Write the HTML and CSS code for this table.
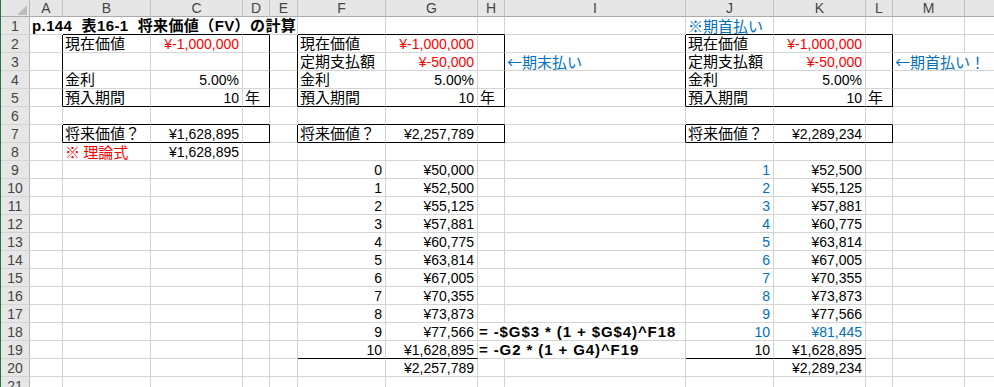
FILE: index.html
```html
<!DOCTYPE html>
<html lang="ja">
<head>
<meta charset="utf-8">
<title>将来価値(FV)の計算</title>
<link rel="stylesheet" href="styles.css">
</head>
<body>
<div class="sheet">
  <div class="corner"></div><div class="hd">A</div><div class="hd">B</div><div class="hd">C</div><div class="hd">D</div><div class="hd">E</div><div class="hd">F</div><div class="hd">G</div><div class="hd">H</div><div class="hd">I</div><div class="hd">J</div><div class="hd">K</div><div class="hd">L</div><div class="hd">M</div><div class="hd"></div>

  <div class="rh">1</div><div class="c nr title">p.144&nbsp;&nbsp;表16-1&nbsp;&nbsp;将来価値（FV）の計算</div><div class="c nr bb"></div><div class="c nr bb"></div><div class="c nr bb"></div><div class="c"></div><div class="c bb"></div><div class="c bb"></div><div class="c bb"></div><div class="c"></div><div class="c bb t blue cjk">※期首払い</div><div class="c bb"></div><div class="c bb"></div><div class="c"></div><div class="c"></div>

  <div class="rh">2</div><div class="c br"></div><div class="c t">現在価値</div><div class="c n red">¥-1,000,000</div><div class="c br"></div><div class="c br"></div><div class="c t">現在価値</div><div class="c n red">¥-1,000,000</div><div class="c br"></div><div class="c br"></div><div class="c t">現在価値</div><div class="c n red">¥-1,000,000</div><div class="c br"></div><div class="c"></div><div class="c"></div>

  <div class="rh">3</div><div class="c br"></div><div class="c"></div><div class="c"></div><div class="c br"></div><div class="c br"></div><div class="c t">定期支払額</div><div class="c n red">¥-50,000</div><div class="c br"></div><div class="c br t blue cjk">←期末払い</div><div class="c t">定期支払額</div><div class="c n red">¥-50,000</div><div class="c br"></div><div class="c nr t blue cjk">←期首払い！</div><div class="c"></div>

  <div class="rh">4</div><div class="c br"></div><div class="c t">金利</div><div class="c n">5.00%</div><div class="c br"></div><div class="c br"></div><div class="c t">金利</div><div class="c n">5.00%</div><div class="c br"></div><div class="c br"></div><div class="c t">金利</div><div class="c n">5.00%</div><div class="c br"></div><div class="c"></div><div class="c"></div>

  <div class="rh">5</div><div class="c br"></div><div class="c bb t">預入期間</div><div class="c bb n">10</div><div class="c bb br t">年</div><div class="c br"></div><div class="c bb t">預入期間</div><div class="c bb n">10</div><div class="c bb br t">年</div><div class="c br"></div><div class="c bb t">預入期間</div><div class="c bb n">10</div><div class="c bb br t">年</div><div class="c"></div><div class="c"></div>

  <div class="rh">6</div><div class="c"></div><div class="c bb"></div><div class="c bb"></div><div class="c bb"></div><div class="c"></div><div class="c bb"></div><div class="c bb"></div><div class="c bb"></div><div class="c"></div><div class="c bb"></div><div class="c bb"></div><div class="c bb"></div><div class="c"></div><div class="c"></div>

  <div class="rh">7</div><div class="c br"></div><div class="c bb t">将来価値？</div><div class="c bb n">¥1,628,895</div><div class="c bb br"></div><div class="c br"></div><div class="c bb t">将来価値？</div><div class="c bb n">¥2,257,789</div><div class="c bb br"></div><div class="c br"></div><div class="c bb t">将来価値？</div><div class="c bb n">¥2,289,234</div><div class="c bb br"></div><div class="c"></div><div class="c"></div>

  <div class="rh">8</div><div class="c"></div><div class="c t red cjk">※ 理論式</div><div class="c n">¥1,628,895</div><div class="c"></div><div class="c"></div><div class="c"></div><div class="c"></div><div class="c"></div><div class="c"></div><div class="c"></div><div class="c"></div><div class="c"></div><div class="c"></div><div class="c"></div>

  <div class="rh">9</div><div class="c"></div><div class="c"></div><div class="c"></div><div class="c"></div><div class="c"></div><div class="c n">0</div><div class="c n">¥50,000</div><div class="c"></div><div class="c"></div><div class="c n blue">1</div><div class="c n">¥52,500</div><div class="c"></div><div class="c"></div><div class="c"></div>

  <div class="rh">10</div><div class="c"></div><div class="c"></div><div class="c"></div><div class="c"></div><div class="c"></div><div class="c n">1</div><div class="c n">¥52,500</div><div class="c"></div><div class="c"></div><div class="c n blue">2</div><div class="c n">¥55,125</div><div class="c"></div><div class="c"></div><div class="c"></div>

  <div class="rh">11</div><div class="c"></div><div class="c"></div><div class="c"></div><div class="c"></div><div class="c"></div><div class="c n">2</div><div class="c n">¥55,125</div><div class="c"></div><div class="c"></div><div class="c n blue">3</div><div class="c n">¥57,881</div><div class="c"></div><div class="c"></div><div class="c"></div>

  <div class="rh">12</div><div class="c"></div><div class="c"></div><div class="c"></div><div class="c"></div><div class="c"></div><div class="c n">3</div><div class="c n">¥57,881</div><div class="c"></div><div class="c"></div><div class="c n blue">4</div><div class="c n">¥60,775</div><div class="c"></div><div class="c"></div><div class="c"></div>

  <div class="rh">13</div><div class="c"></div><div class="c"></div><div class="c"></div><div class="c"></div><div class="c"></div><div class="c n">4</div><div class="c n">¥60,775</div><div class="c"></div><div class="c"></div><div class="c n blue">5</div><div class="c n">¥63,814</div><div class="c"></div><div class="c"></div><div class="c"></div>

  <div class="rh">14</div><div class="c"></div><div class="c"></div><div class="c"></div><div class="c"></div><div class="c"></div><div class="c n">5</div><div class="c n">¥63,814</div><div class="c"></div><div class="c"></div><div class="c n blue">6</div><div class="c n">¥67,005</div><div class="c"></div><div class="c"></div><div class="c"></div>

  <div class="rh">15</div><div class="c"></div><div class="c"></div><div class="c"></div><div class="c"></div><div class="c"></div><div class="c n">6</div><div class="c n">¥67,005</div><div class="c"></div><div class="c"></div><div class="c n blue">7</div><div class="c n">¥70,355</div><div class="c"></div><div class="c"></div><div class="c"></div>

  <div class="rh">16</div><div class="c"></div><div class="c"></div><div class="c"></div><div class="c"></div><div class="c"></div><div class="c n">7</div><div class="c n">¥70,355</div><div class="c"></div><div class="c"></div><div class="c n blue">8</div><div class="c n">¥73,873</div><div class="c"></div><div class="c"></div><div class="c"></div>

  <div class="rh">17</div><div class="c"></div><div class="c"></div><div class="c"></div><div class="c"></div><div class="c"></div><div class="c n">8</div><div class="c n">¥73,873</div><div class="c"></div><div class="c"></div><div class="c n blue">9</div><div class="c n">¥77,566</div><div class="c"></div><div class="c"></div><div class="c"></div>

  <div class="rh">18</div><div class="c"></div><div class="c"></div><div class="c"></div><div class="c"></div><div class="c"></div><div class="c n">9</div><div class="c n">¥77,566</div><div class="c nr formula">= -$G$3 * (1 + $G$4)^F18</div><div class="c"></div><div class="c n blue">10</div><div class="c n blue">¥81,445</div><div class="c"></div><div class="c"></div><div class="c"></div>

  <div class="rh">19</div><div class="c"></div><div class="c"></div><div class="c"></div><div class="c"></div><div class="c"></div><div class="c bb n">10</div><div class="c bb n">¥1,628,895</div><div class="c nr formula">= -G2 * (1 + G4)^F19</div><div class="c"></div><div class="c bb n">10</div><div class="c bb n">¥1,628,895</div><div class="c"></div><div class="c"></div><div class="c"></div>

  <div class="rh">20</div><div class="c"></div><div class="c"></div><div class="c"></div><div class="c"></div><div class="c"></div><div class="c"></div><div class="c n">¥2,257,789</div><div class="c"></div><div class="c"></div><div class="c"></div><div class="c n">¥2,289,234</div><div class="c"></div><div class="c"></div><div class="c"></div>

  <div class="rh">21</div><div class="c"></div><div class="c"></div><div class="c"></div><div class="c"></div><div class="c"></div><div class="c"></div><div class="c"></div><div class="c"></div><div class="c"></div><div class="c"></div><div class="c"></div><div class="c"></div><div class="c"></div><div class="c"></div>
</div>
</body>
</html>
```

FILE: styles.css
```css
html, body {
  margin: 0;
  padding: 0;
  background: #ffffff;
  overflow: hidden;
}

.sheet {
  display: grid;
  grid-template-columns: 29px 33px 88px 92px 27px 28px 88px 92px 27px 181px 88px 92px 27px 72px 72px;
  grid-template-rows: 17px;
  grid-auto-rows: 18px;
  width: max-content;
  border-left: 1px solid #217346;
  background: #ffffff;
  font-family: "Liberation Sans", "Noto Sans CJK JP", sans-serif;
  font-size: 14px;
  color: #000000;
}

.corner {
  box-sizing: border-box;
  background: #e6e6e6;
  border-right: 1px solid #b8b8b8;
  border-bottom: 1px solid #ababab;
  display: flex;
  justify-content: flex-end;
  align-items: flex-end;
  padding: 0 2px 1px 0;
}

.corner::after {
  content: "";
  width: 0;
  height: 0;
  border-left: 10px solid transparent;
  border-bottom: 10px solid #bdbdbd;
}

.hd {
  box-sizing: border-box;
  background: #e6e6e6;
  border-right: 1px solid #c3c3c3;
  border-bottom: 1px solid #ababab;
  text-align: center;
  color: #444444;
  font-size: 14px;
  line-height: 17px;
  overflow: hidden;
}

.rh {
  box-sizing: border-box;
  background: #e6e6e6;
  border-right: 1px solid #b8b8b8;
  border-bottom: 1px solid #d4d4d4;
  text-align: center;
  color: #444444;
  font-size: 14px;
  line-height: 18px;
}

.c {
  box-sizing: border-box;
  border-right: 1px solid #d4d4d4;
  border-bottom: 1px solid #d4d4d4;
  padding: 0 3px 0 2px;
  white-space: nowrap;
  line-height: 17px;
  min-width: 0;
}

.t {
  font-size: 15px;
}

.cjk {
  font-family: "Noto Sans CJK JP", sans-serif;
}

.n {
  text-align: right;
  line-height: 18px;
}

.title {
  font-size: 15px;
  font-weight: bold;
  letter-spacing: 0.4px;
}

.formula {
  font-size: 15px;
  font-weight: bold;
  letter-spacing: 0.9px;
  padding-left: 1px;
}

.red {
  color: #ff0000;
}

.blue {
  color: #0070c0;
}

.bb {
  border-bottom-color: #000000;
}

.br {
  border-right-color: #000000;
}

.nr {
  border-right-color: transparent;
}
```
